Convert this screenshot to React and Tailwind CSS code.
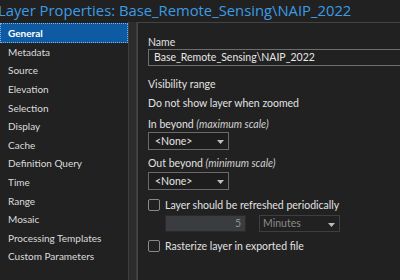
const navItems = [
  'General',
  'Metadata',
  'Source',
  'Elevation',
  'Selection',
  'Display',
  'Cache',
  'Definition Query',
  'Time',
  'Range',
  'Mosaic',
  'Processing Templates',
  'Custom Parameters',
]

function Arrow() {
  return (
    <svg width="7" height="4" viewBox="0 0 7 4" className="absolute right-[4px] top-[7px]">
      <path d="M0 0h7L3.5 4z" fill="#bdbdbd" />
    </svg>
  )
}

function Dropdown({ value }) {
  return (
    <div className="relative w-[81px] h-[18px] border border-[#6a6a6a] bg-[#1d1d1d] text-[#e6e6e6] pl-[6px] leading-[16px]">
      {value}
      <Arrow />
    </div>
  )
}

function Checkbox() {
  return <div className="w-[12px] h-[12px] rounded-[2px] border border-[#8a8a8a] shrink-0" />
}

export default function App() {
  return (
    <div
      className="w-[400px] h-[280px] overflow-hidden bg-[#212121] text-[10.5px] text-[#e2e2e2] flex flex-col"
      style={{ fontFamily: 'Lato, "Noto Sans", sans-serif' }}
    >
      <div
        className="h-[22px] shrink-0 text-[14.8px] leading-[20px] text-[#3c9ce3] ml-[-2px] whitespace-nowrap"
        style={{ fontFamily: '"Open Sans", sans-serif' }}
      >
        Layer Properties: Base_Remote_Sensing\NAIP_2022
      </div>
      <div className="flex flex-1 min-h-0">
        <nav className="w-[128px] shrink-0 pt-[1px] flex flex-col text-[10px]">
          {navItems.map((item, i) => (
            <div
              key={item}
              className={
                i === 0
                  ? 'h-[20px] flex items-center pl-[7px] bg-[#0e5aa3] border border-dotted border-[#7fb3e6] font-bold text-white'
                  : 'h-[18.6px] flex items-center pl-[8px] text-[#dcdcdc]'
              }
            >
              {item}
            </div>
          ))}
        </nav>
        <div className="w-[9px] shrink-0 bg-[#2c2c2c] border-x border-[#3e3e3e]" />
        <section className="flex-1 min-w-0 border-t border-l border-[#444] pl-[10px] pt-[12px] whitespace-nowrap">
          <div className="leading-[14px]">Name</div>
          <div className="h-[17px] border border-[#6e6e6e] pl-[5px] leading-[15px] text-[#e6e6e6] mr-[-4px]">
            Base_Remote_Sensing\NAIP_2022
          </div>
          <div className="mt-[11px] leading-[14px]">Visibility range</div>
          <div className="mt-[5px] leading-[14px]">Do not show layer when zoomed</div>
          <div className="mt-[7px] leading-[14px]">
            In beyond <i className="text-[#d0d0d0]">(maximum scale)</i>
          </div>
          <div className="mt-[1px]">
            <Dropdown value="<None>" />
          </div>
          <div className="mt-[6px] leading-[14px]">
            Out beyond <i className="text-[#d0d0d0]">(minimum scale)</i>
          </div>
          <div className="mt-[2px]">
            <Dropdown value="<None>" />
          </div>
          <div className="mt-[8px] flex items-center gap-[5px] leading-[14px]">
            <Checkbox />
            Layer should be refreshed periodically
          </div>
          <div className="mt-[3px] ml-[17px] flex gap-[13px]">
            <div className="w-[81px] h-[17px] bg-[#3a3c40] border border-[#2a2a2a] text-right pr-[4px] leading-[15px] text-[#8e8e8e]">
              5
            </div>
            <div className="relative w-[81px] h-[17px] border border-[#3e3e3e] pl-[3px] leading-[15px] text-[#8a8a8a]">
              Minutes
              <Arrow />
            </div>
          </div>
          <div className="mt-[7px] flex items-center gap-[5px] leading-[14px]">
            <Checkbox />
            Rasterize layer in exported file
          </div>
        </section>
      </div>
    </div>
  )
}
